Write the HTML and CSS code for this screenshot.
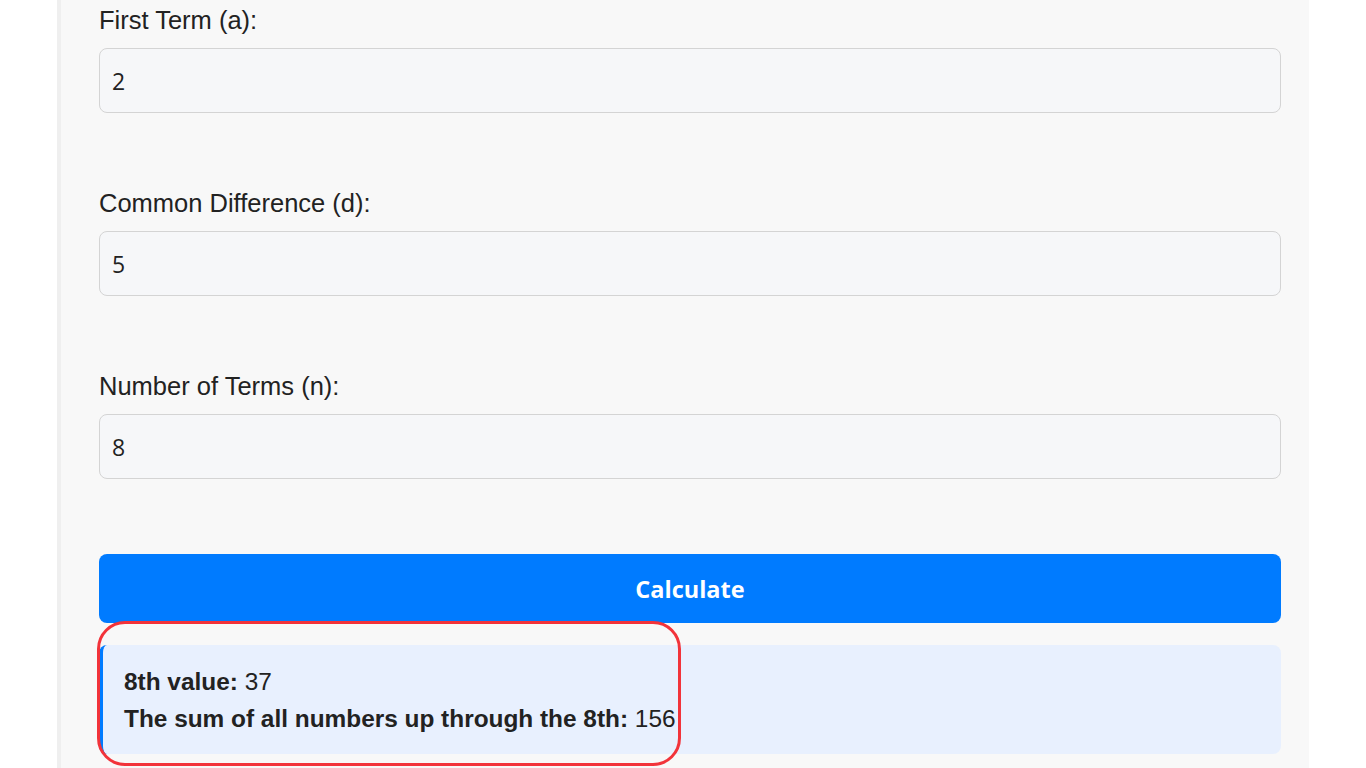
FILE: index.html
```html
<!DOCTYPE html>
<html lang="en">
<head>
    <meta charset="UTF-8">
    <meta name="viewport" content="width=device-width, initial-scale=1.0">
    <title>Arithmetic Sequence Calculator</title>
    <link rel="stylesheet" href="styles.css">
</head>
<body>

<div class="container">
    <div class="field">
        <label for="firstTerm">First Term (a):</label>
        <input type="number" id="firstTerm" value="2">
    </div>
    <div class="field">
        <label for="difference">Common Difference (d):</label>
        <input type="number" id="difference" value="5">
    </div>
    <div class="field">
        <label for="terms">Number of Terms (n):</label>
        <input type="number" id="terms" value="8">
    </div>
    <button id="calcButton">Calculate</button>
    <div class="result" id="result">
        <p><strong>8th value:</strong> 37</p>
        <p><strong>The sum of all numbers up through the 8th:</strong> 156</p>
    </div>
    <div class="highlight"></div>
</div>

</body>
</html>
```

FILE: styles.css
```css
body {
    font-family: "Liberation Sans", Arial, sans-serif;
    background-color: #ffffff;
    margin: 0;
    overflow: hidden;
}
.container {
    position: relative;
    margin-left: 57px;
    width: 1252px;
    box-sizing: border-box;
    min-height: 800px;
    padding: 6px 28px 40px 38px;
    background: #f8f8f8;
    border-left: 4px solid #efefef;
}
.field {
    margin-bottom: 76px;
}
label {
    display: block;
    font-size: 25.5px;
    line-height: 29px;
    color: #222;
    margin-bottom: 13px;
}
input[type="number"] {
    display: block;
    width: 100%;
    height: 65px;
    box-sizing: border-box;
    padding: 0 12px;
    border: 1px solid #d4d4d4;
    border-radius: 8px;
    background: #f6f7f9;
    font-family: "Open Sans", sans-serif;
    font-size: 23px;
    color: #222;
    -moz-appearance: textfield;
}
input::-webkit-outer-spin-button,
input::-webkit-inner-spin-button {
    -webkit-appearance: none;
    margin: 0;
}
button {
    display: block;
    width: 100%;
    height: 69px;
    margin-top: -1px;
    border: none;
    border-radius: 8px;
    background-color: #007bff;
    color: white;
    font-family: "Open Sans", sans-serif;
    font-weight: 700;
    font-size: 23.5px;
    cursor: pointer;
}
.result {
    margin-top: 22px;
    height: 109px;
    box-sizing: border-box;
    padding: 18px 20px 0 21px;
    background-color: #e8f0fe;
    border-left: 4px solid #007bff;
    border-radius: 8px;
    font-size: 24.4px;
    color: #222;
}
.result p {
    margin: 0;
    line-height: 37px;
}
.highlight {
    position: absolute;
    left: 36px;
    top: 621px;
    width: 584px;
    height: 145px;
    box-sizing: border-box;
    border: 3px solid #f2333a;
    border-radius: 28px;
    pointer-events: none;
}
```
